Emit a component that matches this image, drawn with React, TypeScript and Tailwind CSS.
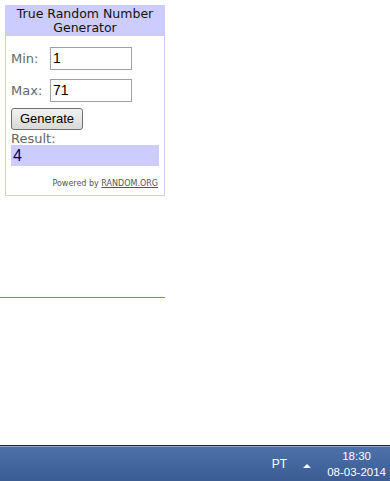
import React from "react";

export default function App() {
  const arial = { fontFamily: '"Liberation Sans", Arial, sans-serif' };
  return (
    <div className="relative w-[390px] h-[481px] bg-white overflow-hidden" style={{ fontFamily: '"DejaVu Sans", Verdana, sans-serif' }}>
      <div className="absolute left-[5px] top-[5px] w-[160px] h-[191px] border border-[#ccccff] bg-white">
        <div className="bg-[#ccccff] h-[30px] flex flex-col items-center justify-center text-[12.5px] leading-[14px] text-[#111]">
          <div>True Random Number</div>
          <div>Generator</div>
        </div>
        <div className="pl-[5px] pt-[11px]">
          <div className="flex items-center h-[23px]">
            <span className="w-[39px] text-[13px] text-[#666]">Min:</span>
            <div className="w-[82px] h-[23px] border border-[#a0a0a0] bg-white text-[14px] pl-[2px] flex items-center text-black" style={arial}>1</div>
          </div>
          <div className="flex items-center h-[23px] mt-[9px]">
            <span className="w-[39px] text-[13px] text-[#666]">Max:</span>
            <div className="w-[82px] h-[23px] border border-[#a0a0a0] bg-white text-[14px] pl-[2px] flex items-center text-black" style={arial}>71</div>
          </div>
          <div className="mt-[6px] w-[72px] h-[22px] border border-[#707070] rounded-[3px] bg-gradient-to-b from-[#f2f2f2] to-[#d8d8d8] flex items-center justify-center text-[13px] text-black" style={arial}>Generate</div>
          <div className="text-[13px] leading-[13px] text-[#666] mt-[2px]">Result:</div>
          <div className="w-[148px] h-[21px] bg-[#ccccff] text-[16px] text-[#000066] pl-[2px] flex items-center" style={arial}>4</div>
          <div className="flex justify-end pr-[6px] mt-[12px] text-[8px] text-[#555]">
            <span>Powered by&nbsp;</span><span className="underline">RANDOM.ORG</span>
          </div>
        </div>
      </div>
      <div className="absolute left-0 top-[297px] w-[165px] h-[1px] bg-[#7777ff]"></div>
      <div className="absolute left-0 top-[445px] w-[390px] h-[36px] bg-gradient-to-b from-[#4e72ab] to-[#3b5c93]">
        <div className="h-[1px] bg-[#222a35]"></div>
        <div className="h-[1px] bg-[#8fa6c8]"></div>
        <div className="absolute right-0 top-[2px] h-[34px] flex items-center text-white text-[12px]" style={arial}>
          <span className="mr-[16px]">PT</span>
          <svg width="8" height="5" viewBox="0 0 8 5" className="mr-[16px] mt-[2px]"><path d="M0 5 L4 1 L8 5 Z" fill="white" /></svg>
          <div className="flex flex-col items-center mr-[4px] leading-[16px] text-[11.5px]">
            <span>18:30</span>
            <span>08-03-2014</span>
          </div>
        </div>
      </div>
    </div>
  );
}
